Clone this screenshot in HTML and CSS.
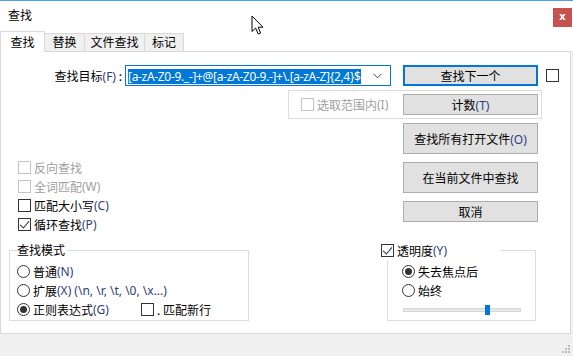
FILE: index.html
```html
<!DOCTYPE html>
<html lang="zh-CN">
<head>
    <meta charset="UTF-8">
    <title>查找</title>
    <link rel="stylesheet" href="styles.css">
</head>
<body>
    <div class="window">
        <div class="titlebar">
            <span class="title">查找</span>
            <span class="close">x</span>
        </div>
        <div class="tabs">
            <div class="tab active">查找</div>
            <div class="tab">替换</div>
            <div class="tab">文件查找</div>
            <div class="tab">标记</div>
        </div>
        <div class="panel">
            <div class="row-find">
                <label class="find-label">查找目标<span class="key">(F)</span> :</label>
                <div class="combo">
                    <div class="combo-text"><span class="selected">[a-zA-Z0-9._-]+@[a-zA-Z0-9.-]+\.[a-zA-Z]{2,4}$</span></div>
                    <svg class="chevron" width="9" height="6" viewBox="0 0 9 6"><path d="M0.5 0.8 L4.5 4.8 L8.5 0.8" fill="none" stroke="#444" stroke-width="1"/></svg>
                </div>
                <button class="btn default">查找下一个</button>
                <span class="box right-box"></span>
            </div>

            <div class="sel-group">
                <div class="check disabled"><span class="box"></span>选取范围内<span class="key">(I)</span></div>
                <button class="btn count">计数<span class="key">(T)</span></button>
            </div>

            <div class="middle">
                <div class="options">
                    <div class="check disabled"><span class="box"></span>反向查找</div>
                    <div class="check disabled"><span class="box"></span>全词匹配<span class="key">(W)</span></div>
                    <div class="check"><span class="box"></span>匹配大小写<span class="key">(C)</span></div>
                    <div class="check"><span class="box checked"></span>循环查找<span class="key">(P)</span></div>
                </div>
                <div class="actions">
                    <button class="btn tall">查找所有打开文件<span class="key">(O)</span></button>
                    <button class="btn tall">在当前文件中查找</button>
                    <button class="btn">取消</button>
                </div>
            </div>

            <div class="bottom">
                <div class="group mode">
                    <span class="legend">查找模式</span>
                    <div class="check"><span class="radio"></span>普通<span class="key">(N)</span></div>
                    <div class="check"><span class="radio"></span>扩展<span class="key">(X) (\n, \r, \t, \0, \x...)</span></div>
                    <div class="check">
                        <span class="regex"><span class="radio on"></span>正则表达式<span class="key">(G)</span></span>
                        <span class="box"></span>. 匹配新行
                    </div>
                </div>
                <div class="group trans">
                    <span class="legend check"><span class="box checked"></span>透明度<span class="key">(Y)</span></span>
                    <div class="check"><span class="radio on"></span>失去焦点后</div>
                    <div class="check"><span class="radio"></span>始终</div>
                    <div class="slider">
                        <div class="track"><span class="thumb"></span></div>
                    </div>
                </div>
            </div>
        </div>
        <div class="statusbar">
            <svg class="grip" width="9" height="9" viewBox="0 0 9 9" fill="#bdbdbd">
                <rect x="6" y="0" width="2" height="2"/>
                <rect x="3" y="3" width="2" height="2"/>
                <rect x="6" y="3" width="2" height="2"/>
                <rect x="0" y="6" width="2" height="2"/>
                <rect x="3" y="6" width="2" height="2"/>
                <rect x="6" y="6" width="2" height="2"/>
            </svg>
        </div>
        <svg class="cursor" width="14" height="21" viewBox="0 0 14 21">
            <path d="M1 1 L1 16.5 L4.6 13 L7.2 19 L9.6 18 L7.1 12.2 L12 12.2 Z" fill="#fff" stroke="#000" stroke-width="1" stroke-linejoin="round"/>
        </svg>
    </div>
</body>
</html>
```

FILE: styles.css
```css
* {
    box-sizing: border-box;
}

body {
    margin: 0;
    font-family: "Noto Sans CJK SC", "Noto Sans", sans-serif;
    font-size: 12px;
    color: #000;
    background: #fff;
}

.window {
    position: relative;
    width: 573px;
    height: 356px;
    background: #f0f0f0;
    border-top: 1px solid #4aa2e3;
    display: flex;
    flex-direction: column;
    overflow: hidden;
}

.titlebar {
    height: 30px;
    background: #fff;
    display: flex;
    justify-content: space-between;
    align-items: flex-start;
}

.title {
    margin: 5px 0 0 8px;
    line-height: 18px;
}

.close {
    width: 19px;
    height: 19px;
    margin: 7px 1px 0 0;
    background: #c75050;
    color: #fff;
    font-family: "DejaVu Sans", sans-serif;
    font-weight: bold;
    font-size: 10px;
    line-height: 18px;
    text-align: center;
}

.tabs {
    height: 20px;
    background: #fff;
    display: flex;
    align-items: flex-end;
}

.tab {
    height: 18px;
    padding: 0;
    line-height: 16px;
    text-align: center;
    white-space: nowrap;
    background: #f0f0f0;
    border: 1px solid #d9d9d9;
    border-bottom: none;
    border-left: none;
}

.tab.active {
    position: relative;
    z-index: 1;
    width: 45px;
    height: 21px;
    margin-bottom: -1px;
    line-height: 20px;
    background: #fff;
    border-left: 1px solid #d9d9d9;
}

.tab:nth-child(2) { width: 40px; }
.tab:nth-child(3) { width: 60px; }
.tab:nth-child(4) { width: 39px; }

.panel {
    width: 571px;
    height: 283px;
    background: #fff;
    border: 1px solid #d9d9d9;
}

.key {
    color: #2b3f7c;
    font-family: "Noto Sans", sans-serif;
    font-size: 12px;
}

.disabled,
.disabled .key {
    color: #a0a0a0;
}

/* first row: search text */
.row-find {
    display: flex;
    align-items: center;
    height: 21px;
    margin-top: 13px;
}

.find-label {
    width: 124px;
    padding-right: 3px;
    text-align: right;
}

.combo {
    width: 266px;
    height: 21px;
    border: 1px solid #0078d7;
    display: flex;
    align-items: center;
}

.combo-text {
    flex: 1;
    overflow: hidden;
    white-space: nowrap;
    margin-left: 2px;
}

.selected {
    display: inline-block;
    background: #0078d7;
    color: #fff;
    font-family: "Noto Sans", sans-serif;
    font-size: 12px;
    line-height: 15px;
    letter-spacing: -0.32px;
}

.chevron {
    flex: none;
    margin: 0 8px 0 6px;
}

.btn {
    display: block;
    width: 135px;
    height: 21px;
    padding: 0;
    border: 1px solid #adadad;
    background: #e1e1e1;
    font-family: inherit;
    font-size: 12px;
    color: #000;
    line-height: 17px;
}

.btn.default {
    margin-left: 12px;
    border: 2px solid #0078d7;
}

.btn.tall {
    height: 31px;
}

.right-box {
    margin-left: 8px;
}

/* checkboxes and radios */
.check {
    display: flex;
    align-items: center;
    height: 19px;
    white-space: nowrap;
}

.box,
.radio {
    display: inline-block;
    flex: none;
    width: 13px;
    height: 13px;
    margin-right: 3px;
    border: 1px solid #333;
    background: #fff;
}

.disabled .box {
    border-color: #c4c4c4;
}

.box.checked {
    position: relative;
}

.box.checked::after {
    content: "";
    position: absolute;
    left: 3px;
    top: 0;
    width: 4px;
    height: 8px;
    border: solid #333;
    border-width: 0 1px 1px 0;
    transform: rotate(40deg);
}

.radio {
    border-radius: 50%;
    position: relative;
}

.radio.on::after {
    content: "";
    position: absolute;
    left: 2px;
    top: 2px;
    width: 7px;
    height: 7px;
    border-radius: 50%;
    background: #333;
}

/* in-selection group */
.sel-group {
    display: flex;
    align-items: center;
    justify-content: space-between;
    width: 254px;
    height: 29px;
    margin: 4px 0 0 287px;
    padding: 0 3px 0 12px;
    border: 1px solid #dcdcdc;
}

/* options + action buttons */
.middle {
    display: flex;
    margin-top: 4px;
}

.options {
    width: 402px;
    padding: 35px 0 0 17px;
}

.actions {
    display: flex;
    flex-direction: column;
    gap: 8px;
}

/* bottom group boxes */
.bottom {
    display: flex;
    margin-top: 16px;
}

.group {
    position: relative;
    height: 71px;
    padding-top: 11px;
    border: 1px solid #dcdcdc;
}

.legend {
    position: absolute;
    top: -10px;
    background: #fff;
    line-height: 18px;
}

.mode {
    width: 240px;
    margin-left: 8px;
    padding-left: 7px;
}

.mode .legend {
    left: 7px;
    padding: 0 2px 0 0;
}

.regex {
    display: flex;
    align-items: center;
    width: 124px;
}

.trans {
    width: 149px;
    margin-left: 138px;
    padding-left: 14px;
}

.trans .legend {
    left: -7px;
    width: 120px;
    height: 19px;
}

.slider {
    height: 19px;
    display: flex;
    align-items: center;
}

.track {
    position: relative;
    width: 118px;
    height: 4px;
    margin-left: 1px;
    background: #e7eaea;
    border: 1px solid #d6d6d6;
}

.thumb {
    position: absolute;
    left: 81px;
    top: -4px;
    width: 5px;
    height: 10px;
    background: #0078d7;
}

.statusbar {
    flex: 1;
    display: flex;
    justify-content: flex-end;
    align-items: flex-end;
    padding: 0 2px 2px 0;
}

.cursor {
    position: absolute;
    left: 251px;
    top: 14px;
}
```
